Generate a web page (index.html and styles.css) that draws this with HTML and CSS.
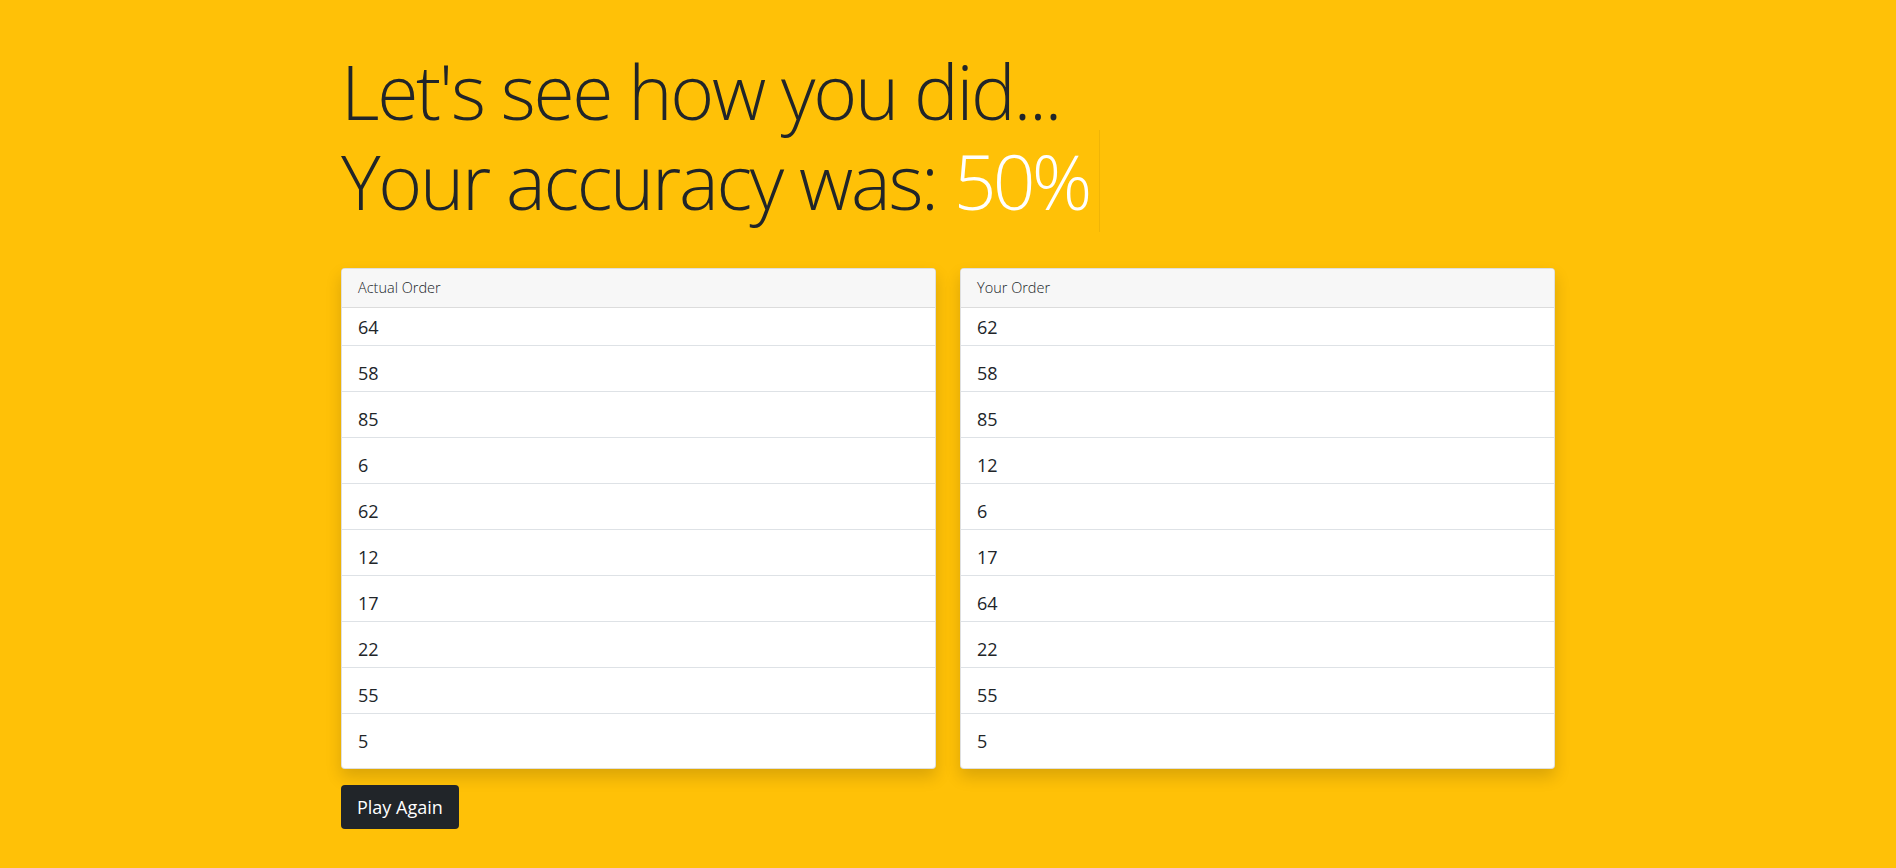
FILE: index.html
```html
<!DOCTYPE html>
<html lang="en">
<head>
<meta charset="utf-8">
<title>Results</title>
<link rel="stylesheet" href="styles.css">
</head>
<body>
<main class="page">
  <h1 class="title">Let's see how you did...<br>Your accuracy was: <span class="score">50%</span></h1>
  <div class="lists">
    <section class="card">
      <div class="card-header">Actual Order</div>
      <ul class="items">
        <li class="item">64</li>
        <li class="item">58</li>
        <li class="item">85</li>
        <li class="item">6</li>
        <li class="item">62</li>
        <li class="item">12</li>
        <li class="item">17</li>
        <li class="item">22</li>
        <li class="item">55</li>
        <li class="item">5</li>
      </ul>
    </section>
    <section class="card">
      <div class="card-header">Your Order</div>
      <ul class="items">
        <li class="item">62</li>
        <li class="item">58</li>
        <li class="item">85</li>
        <li class="item">12</li>
        <li class="item">6</li>
        <li class="item">17</li>
        <li class="item">64</li>
        <li class="item">22</li>
        <li class="item">55</li>
        <li class="item">5</li>
      </ul>
    </section>
  </div>
  <button class="btn" type="button">Play Again</button>
</main>
</body>
</html>
```

FILE: styles.css
```css
html, body {
  margin: 0;
  padding: 0;
}
body {
  background: #ffc107;
  color: #212529;
  font-family: "Open Sans", "Noto Sans", sans-serif;
}
.page {
  width: 1214px;
  margin: 0 auto;
  padding-top: 46px;
  display: flex;
  flex-direction: column;
  align-items: flex-start;
}
.title {
  margin: 0;
  font-weight: 300;
  font-size: 75px;
  line-height: 90px;
  letter-spacing: -2.3px;
  color: #212529;
}
.score {
  color: #ffffff;
  letter-spacing: -3.8px;
  padding-right: 10px;
  border-right: 1px solid rgba(0, 0, 0, 0.06);
}
.lists {
  margin-top: 42px;
  width: 100%;
  display: grid;
  grid-template-columns: 1fr 1fr;
  gap: 24px;
}
.card {
  background: #fff;
  border: 1px solid rgba(0, 0, 0, 0.125);
  border-radius: 4px;
  box-shadow: 0 8px 16px rgba(0, 0, 0, 0.15);
  overflow: hidden;
}
.card-header {
  background: #f7f7f7;
  border-bottom: 1px solid #dcdcdc;
  padding: 8px 16px;
  font-size: 14.5px;
  line-height: 22px;
  font-weight: 300;
}
.items {
  list-style: none;
  margin: 0;
  padding: 0;
}
.item {
  padding: 15px 16px 6px;
  font-size: 18px;
  line-height: 24px;
  font-weight: 500;
  border-bottom: 1px solid #dee2e6;
}
.item:first-child {
  padding-top: 7px;
}
.item:last-child {
  padding-bottom: 15px;
  border-bottom: 0;
}
.btn {
  margin-top: 16px;
  background: #212529;
  color: #fff;
  border: 0;
  border-radius: 4px;
  padding: 8px 16px;
  font-family: "Open Sans", "Noto Sans", sans-serif;
  font-size: 18px;
  line-height: 28px;
  cursor: pointer;
}
```
